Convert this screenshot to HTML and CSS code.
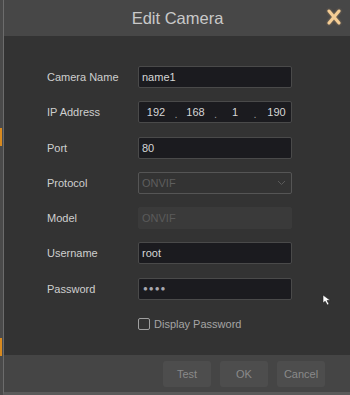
FILE: index.html
```html
<!DOCTYPE html>
<html>
<head>
<meta charset="utf-8">
<link rel="stylesheet" href="styles.css">
</head>
<body>
<div class="screen">
  <div class="edge">
    <div class="mark mark-top"></div>
    <div class="mark mark-bottom"></div>
  </div>
  <div class="dialog">
    <div class="header">
      <span class="title">Edit Camera</span>
      <svg class="close" width="14" height="16" viewBox="0 0 14 16">
        <path d="M2 2 L12 14 M12 2 L2 14" stroke="#f4cd95" stroke-width="3" stroke-linecap="round" fill="none"/>
      </svg>
    </div>
    <div class="body">
      <div class="form">
        <label class="label">Camera Name</label>
        <div class="field">name1</div>

        <label class="label">IP Address</label>
        <div class="field ip">
          <span>192</span><span class="dot">.</span>
          <span>168</span><span class="dot">.</span>
          <span>1</span><span class="dot">.</span>
          <span>190</span>
        </div>

        <label class="label">Port</label>
        <div class="field">80</div>

        <label class="label">Protocol</label>
        <div class="field select">
          <span>ONVIF</span>
          <svg width="9" height="6" viewBox="0 0 9 6"><path d="M1 1 L4.5 4.5 L8 1" stroke="#5a5a5a" stroke-width="1" fill="none"/></svg>
        </div>

        <label class="label">Model</label>
        <div class="field disabled">ONVIF</div>

        <label class="label">Username</label>
        <div class="field">root</div>

        <label class="label">Password</label>
        <div class="field pass">&#9679;&#9679;&#9679;&#9679;</div>

        <span></span>
        <div class="check-row">
          <span class="checkbox"></span>
          <span class="check-label">Display Password</span>
        </div>
      </div>
      <svg class="cursor" width="12" height="13" viewBox="0 0 12 13">
        <path d="M1 1 L1 9 L3.2 7.2 L5.3 11 L7 10.1 L5 6.5 L8.2 6.3 Z" fill="#fff" stroke="#222" stroke-width="0.6"/>
      </svg>
    </div>
    <div class="footer">
      <button class="btn">Test</button>
      <button class="btn">OK</button>
      <button class="btn">Cancel</button>
    </div>
  </div>
</div>
</body>
</html>
```

FILE: styles.css
```css
html, body {
  margin: 0;
  padding: 0;
  background: #2e2e2e;
}
.screen {
  width: 350px;
  height: 395px;
  display: flex;
  font-family: "Liberation Sans", Arial, sans-serif;
  overflow: hidden;
}
.edge {
  width: 3px;
  background: #4a4a4a;
  position: relative;
}
.mark {
  position: absolute;
  left: 0;
  width: 2px;
  background: #d98a1e;
}
.mark-top { top: 128px; height: 18px; }
.mark-bottom { top: 338px; height: 18px; }
.dialog {
  flex: 1;
  display: flex;
  flex-direction: column;
  border-left: 1px solid #6c6c6c;
  border-bottom: 3px solid #5a5a5a;
  background: #333333;
}
.header {
  height: 36px;
  background: #474747;
  display: flex;
  align-items: center;
  justify-content: center;
  position: relative;
}
.title {
  color: #c9c9c9;
  font-size: 16.5px;
  margin-left: 1px;
}
.close {
  position: absolute;
  right: 9px;
  top: 9px;
  filter: drop-shadow(0 0 1px rgba(255, 200, 130, 0.5));
}
.body {
  flex: 1;
  position: relative;
  padding-top: 30px;
}
.form {
  display: grid;
  grid-template-columns: 91px 154px;
  grid-auto-rows: 22px;
  row-gap: 13.3px;
  padding-left: 43px;
  align-items: center;
}
.label {
  color: #cfcfcf;
  font-size: 11px;
}
.field {
  height: 22px;
  box-sizing: border-box;
  background: #1b1b1f;
  border: 1px solid #4a4a4a;
  border-radius: 2px;
  color: #d6d6d6;
  font-size: 11px;
  display: flex;
  align-items: center;
  padding-left: 3px;
}
.ip {
  display: grid;
  grid-template-columns: 28px 12px 27px 13px 26px 14px 1fr;
  align-items: center;
  padding: 0 0 0 3px;
  text-align: center;
}
.ip .dot {
  color: #9a9a9a;
  margin-top: 4px;
}
.select {
  background: transparent;
  border-color: #555555;
  color: #5e5e5e;
  justify-content: space-between;
  padding-right: 5px;
}
.disabled {
  background: #3a3a3a;
  border-color: #3a3a3a;
  color: #5a5a5a;
}
.pass {
  color: #a8a8b0;
  font-size: 8px;
  letter-spacing: 1px;
  padding-left: 4px;
}
.check-row {
  display: flex;
  align-items: center;
  gap: 4px;
}
.checkbox {
  width: 12px;
  height: 12px;
  box-sizing: border-box;
  border: 1px solid #a0a0a0;
  border-radius: 2px;
}
.check-label {
  color: #a5a5a5;
  font-size: 11px;
}
.cursor {
  position: absolute;
  left: 318px;
  top: 258px;
}
.footer {
  height: 37px;
  background: #454545;
  display: flex;
  align-items: center;
  justify-content: flex-end;
  gap: 9px;
  padding-right: 25px;
}
.btn {
  height: 26px;
  width: 48px;
  border: none;
  border-radius: 3px;
  background: #4d4d4d;
  color: #8a8a8a;
  font-family: "Liberation Sans", Arial, sans-serif;
  font-size: 11px;
  padding: 0;
  margin-top: 1px;
}
```
